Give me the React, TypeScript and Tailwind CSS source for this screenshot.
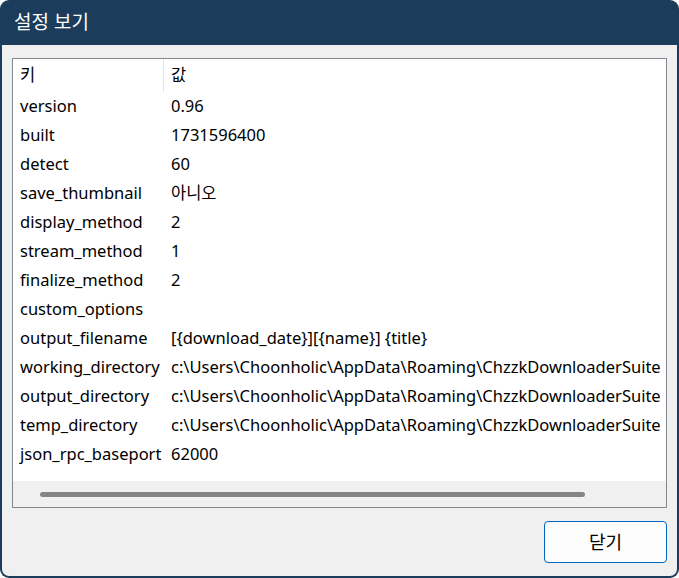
import React from 'react';

const rows: [string, string][] = [
  ['version', '0.96'],
  ['built', '1731596400'],
  ['detect', '60'],
  ['save_thumbnail', '아니오'],
  ['display_method', '2'],
  ['stream_method', '1'],
  ['finalize_method', '2'],
  ['custom_options', ''],
  ['output_filename', '[{download_date}][{name}] {title}'],
  ['working_directory', 'c:\\Users\\Choonholic\\AppData\\Roaming\\ChzzkDownloaderSuite'],
  ['output_directory', 'c:\\Users\\Choonholic\\AppData\\Roaming\\ChzzkDownloaderSuite'],
  ['temp_directory', 'c:\\Users\\Choonholic\\AppData\\Roaming\\ChzzkDownloaderSuite'],
  ['json_rpc_baseport', '62000'],
];

const font = { fontFamily: '"Noto Sans", "Noto Sans CJK KR", sans-serif' };

const App = () => {
  return (
    <div className="w-[679px] h-[578px] bg-[#1b3d5b] rounded-[9px] flex flex-col text-[#000]" style={font}>
      {/* Title bar */}
      <div className="h-[45px] shrink-0 flex items-center px-[14px] text-white text-[19px]">
        설정 보기
      </div>

      {/* Body */}
      <div className="flex-1 mx-[2px] mb-[2px] bg-[#f0f0f0] rounded-b-[7px] flex flex-col px-[10px] pt-[13px]">
        <div className="h-[450px] border border-[#828790] bg-white flex flex-col overflow-hidden">
          <div className="flex-1 overflow-hidden">
            <div className="flex h-[33px] items-center text-[16.5px]">
              <div className="w-[151px] pl-[7px] h-full flex items-center border-r border-[#e5e5e5]">키</div>
              <div className="pl-[7px]">값</div>
            </div>
            {rows.map(([k, v]) => (
              <div key={k} className="flex h-[29px] items-center text-[16.5px] whitespace-nowrap">
                <div className="w-[151px] shrink-0 pl-[7px]">{k}</div>
                <div className="pl-[7px]">{v}</div>
              </div>
            ))}
          </div>
          {/* Horizontal scrollbar */}
          <div className="h-[26px] bg-[#f0f0f0] flex items-center pl-[27px]">
            <div className="w-[545px] h-[5px] rounded-full bg-[#858585]" />
          </div>
        </div>

        <div className="flex justify-end pt-[13px]">
          <button className="w-[123px] h-[42px] rounded-[4px] border border-[#0067c0] bg-[#fdfdfd] text-[18px] flex items-center justify-center">
            닫기
          </button>
        </div>
      </div>
    </div>
  );
};

export default App;
